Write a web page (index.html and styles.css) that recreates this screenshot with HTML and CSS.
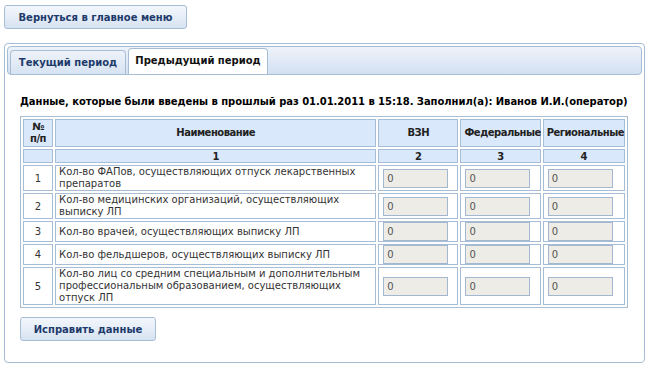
FILE: index.html
```html
<!DOCTYPE html>
<html lang="ru">
<head>
<meta charset="utf-8">
<link rel="stylesheet" href="styles.css">
</head>
<body>
<div class="page">
  <div class="top"><button class="btn btn-back">Вернуться в главное меню</button></div>
  <div class="tabs">
    <div class="tabbar">
      <div class="tab">Текущий период</div>
      <div class="tab active">Предыдущий период</div>
    </div>
    <div class="panel">
      <div class="info">Данные, которые были введены в прошлый раз 01.01.2011 в 15:18. Заполнил(а): Иванов И.И.(оператор)</div>
      <table class="grid">
        <colgroup>
          <col class="w-num"><col class="w-name"><col class="w-v"><col class="w-v"><col class="w-r">
        </colgroup>
        <tr class="head">
          <th>№<br>п/п</th>
          <th>Наименование</th>
          <th>ВЗН</th>
          <th>Федеральные</th>
          <th>Региональные</th>
        </tr>
        <tr class="nums">
          <th></th><th>1</th><th>2</th><th>3</th><th>4</th>
        </tr>
        <tr class="r2">
          <td class="n">1</td>
          <td class="t">Кол-во ФАПов, осуществляющих отпуск лекарственных препаратов</td>
          <td class="i"><input value="0" disabled></td>
          <td class="i"><input value="0" disabled></td>
          <td class="i"><input value="0" disabled></td>
        </tr>
        <tr class="r2">
          <td class="n">2</td>
          <td class="t">Кол-во медицинских организаций, осуществляющих выписку ЛП</td>
          <td class="i"><input value="0" disabled></td>
          <td class="i"><input value="0" disabled></td>
          <td class="i"><input value="0" disabled></td>
        </tr>
        <tr class="r1">
          <td class="n">3</td>
          <td class="t">Кол-во врачей, осуществляющих выписку ЛП</td>
          <td class="i"><input value="0" disabled></td>
          <td class="i"><input value="0" disabled></td>
          <td class="i"><input value="0" disabled></td>
        </tr>
        <tr class="r1">
          <td class="n">4</td>
          <td class="t">Кол-во фельдшеров, осуществляющих выписку ЛП</td>
          <td class="i"><input value="0" disabled></td>
          <td class="i"><input value="0" disabled></td>
          <td class="i"><input value="0" disabled></td>
        </tr>
        <tr class="r3">
          <td class="n">5</td>
          <td class="t">Кол-во лиц со средним специальным и дополнительным профессиональным образованием, осуществляющих отпуск ЛП</td>
          <td class="i"><input value="0" disabled></td>
          <td class="i"><input value="0" disabled></td>
          <td class="i"><input value="0" disabled></td>
        </tr>
      </table>
      <button class="btn btn-fix">Исправить данные</button>
    </div>
  </div>
</div>
</body>
</html>
```

FILE: styles.css
```css
html, body { margin: 0; padding: 0; background: #fff; }
body { font-family: "DejaVu Sans", Verdana, sans-serif; font-size: 10px; color: #000; }
.page { padding: 5px 5px 0 4px; }
.top { height: 38px; }
.btn {
  font-family: "DejaVu Sans", Verdana, sans-serif;
  font-size: 10px; font-weight: bold; color: #1d3a6b;
  border: 1px solid #a7bdd6; border-radius: 3px;
  background: linear-gradient(#f3f7fc, #d7e3f2);
  padding: 0; margin: 0; height: 24px; cursor: pointer;
}
.btn-back { width: 183px; }
.tabs {
  border: 1px solid #a7bdd6; border-radius: 4px;
  height: 320px; box-sizing: border-box; padding: 2px;
}
.tabbar {
  display: flex; gap: 2px; height: 29px; box-sizing: border-box;
  padding: 3px 0 0 2px; align-items: flex-end;
  border: 1px solid #a7bdd6; border-radius: 4px;
  background: linear-gradient(#eef3fa, #d3e0f1);
}
.tab {
  font-weight: bold; color: #1d3a6b; white-space: nowrap;
  border: 1px solid #a7bdd6; border-bottom: none; border-radius: 4px 4px 0 0;
  background: linear-gradient(#eef3fa, #d7e3f2);
  line-height: 24px; height: 24px; box-sizing: border-box;
  width: 116px; text-align: center;
}
.tab.active { background: #fff; color: #111; width: 140px; height: 26px; line-height: 23px; }
.panel { padding: 21px 0 0 13px; }
.info { font-weight: bold; height: 20px; white-space: nowrap; letter-spacing: -0.05px; }
.grid {
  border: 1px solid #a7bdd6; border-spacing: 2px; width: 608px;
  table-layout: fixed;
}
.w-num { width: 30px; }
.w-name { width: 320px; }
.w-v { width: 80px; }
.w-r { width: 82px; }
.grid th, .grid td { border: 1px solid #a7bdd6; padding: 0 3px; }
.grid th { background: #d9e8fb; font-weight: bold; color: #222; letter-spacing: -0.5px; }
.head th { height: 26px; line-height: 12px; }
.nums th { height: 12px; line-height: 11px; }
.n { text-align: center; color: #333; }
.t { color: #333; line-height: 12px; }
.r2 td { height: 24px; }
.r1 td { height: 19px; }
.r3 td { height: 36px; }
.i { padding: 0 3px; }
.i input {
  width: 65px; height: 19px; box-sizing: border-box; margin: 0 0 0 1px; display: block;
  border: 1px solid #a3b8d0; background: #edece6; color: #555;
  font-family: "DejaVu Sans", Verdana, sans-serif; font-size: 10px;
  padding: 0 3px;
}
.btn-fix { width: 136px; margin-top: 9px; }
```
